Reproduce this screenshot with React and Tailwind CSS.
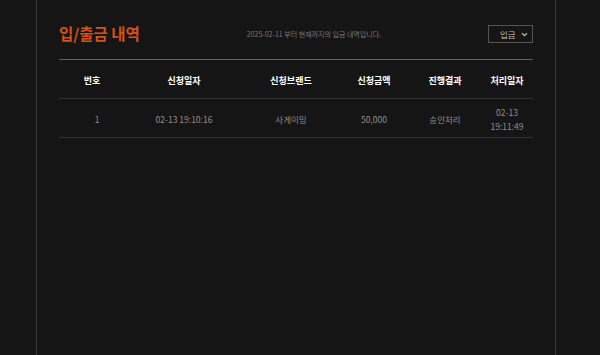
import React from "react";

const cols = "grid grid-cols-[66px_118px_96px_70px_72px_52px]";

export default function App() {
  const font = { fontFamily: '"Noto Sans CJK KR", "Noto Sans", sans-serif' };
  return (
    <div className="min-h-[355px] w-[600px] bg-[#151515] pl-[36px]" style={font}>
      <div className="min-h-[355px] w-[520px] border-x border-[#3a3a3a] px-[22px] pt-[25px]">
        <div className="flex h-[18px] items-center justify-between">
          <h1 className="text-[15.5px] font-bold leading-none text-[#d9500f]">입/출금 내역</h1>
          <p className="text-[7px] leading-none text-[#7a7a7a]">2025-02-11 부터 현재까지의 입금 내역입니다.</p>
          <div className="flex h-[18px] w-[45px] items-center border border-[#555] pl-[11px] pr-[4px]">
            <span className="text-[8.5px] leading-none text-[#bbb]">입금</span>
            <svg className="ml-auto" width="7" height="5" viewBox="0 0 7 5">
              <path d="M1 1.2 L3.5 3.6 L6 1.2" fill="none" stroke="#bbb" strokeWidth="1.2" />
            </svg>
          </div>
        </div>
        <div className="mt-[16px] border-t border-[#a64b16]">
          <div className={`${cols} h-[39px] items-center border-b border-[#333] pt-[3px] text-center text-[9px] font-bold text-white`}>
            <div>번호</div>
            <div>신청일자</div>
            <div>신청브랜드</div>
            <div>신청금액</div>
            <div>진행결과</div>
            <div>처리일자</div>
          </div>
          <div className={`${cols} h-[39px] items-center border-b border-[#333] pt-[1px] text-center text-[8.5px] leading-[14px] text-[#8f8f8f]`}>
            <div className="pl-[10px]">1</div>
            <div>02-13 19:10:16</div>
            <div>사게이밍</div>
            <div>50,000</div>
            <div>승인처리</div>
            <div>02-13<br />19:11:49</div>
          </div>
        </div>
      </div>
    </div>
  );
}
